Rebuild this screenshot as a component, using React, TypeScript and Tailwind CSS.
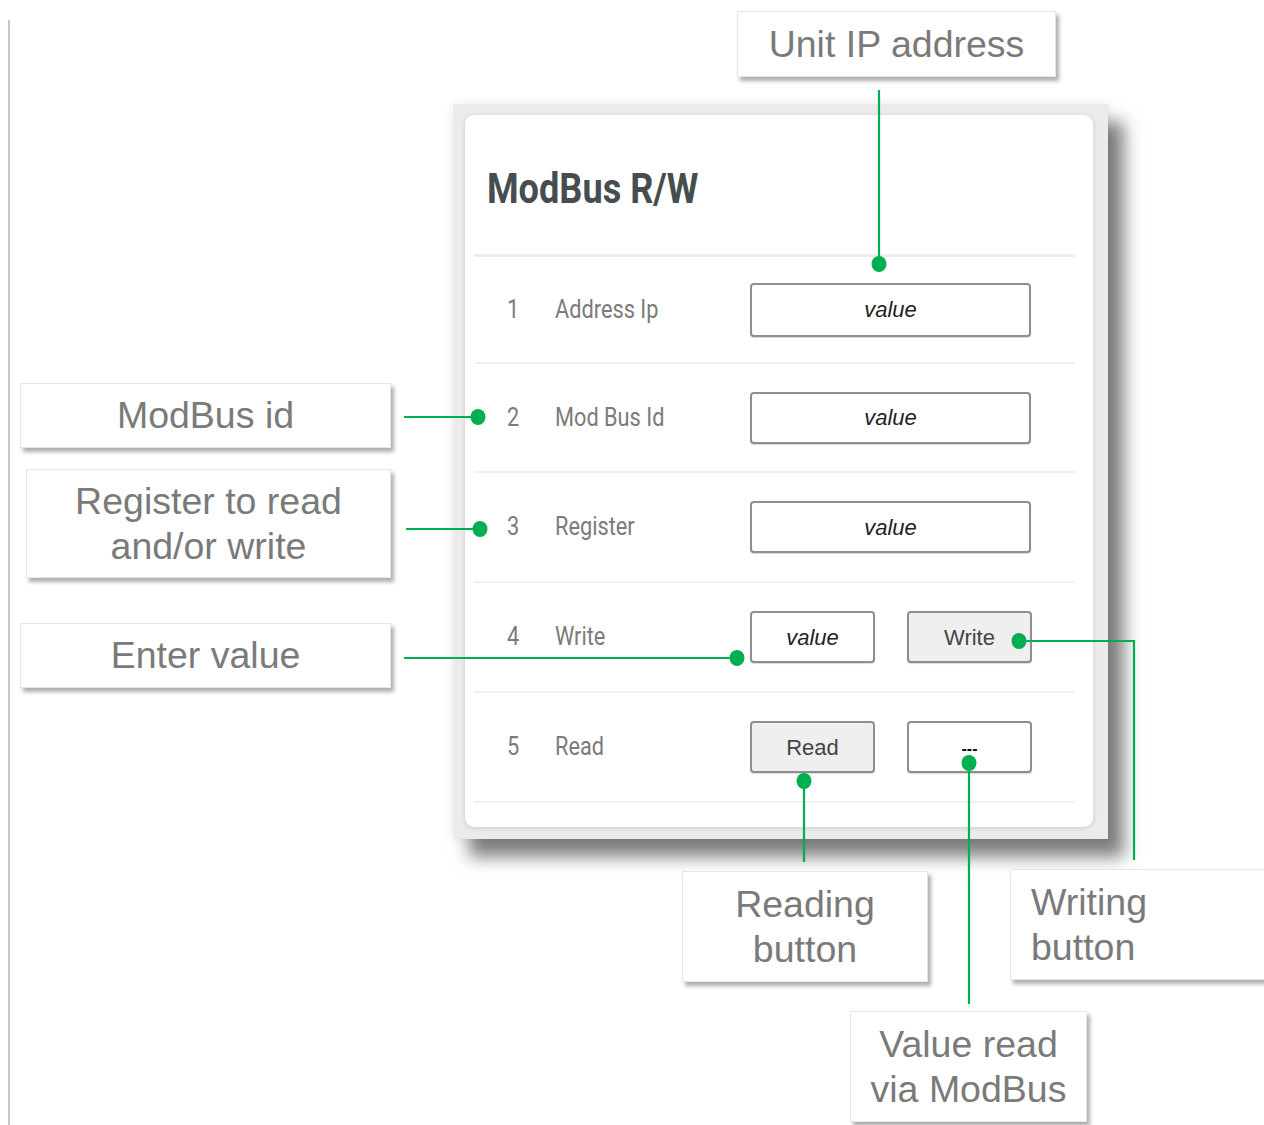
import React from 'react';

const rows = [
  { n: '1', label: 'Address Ip', kind: 'wide', h: 'h-[107px]' },
  { n: '2', label: 'Mod Bus Id', kind: 'wide', h: 'h-[109px]' },
  { n: '3', label: 'Register', kind: 'wide', h: 'h-[110px]' },
  { n: '4', label: 'Write', kind: 'write', h: 'h-[110px]' },
  { n: '5', label: 'Read', kind: 'read', h: 'h-[110px]' },
];

function Field({ children, wide, button, h }: { children: React.ReactNode; wide?: boolean; button?: boolean; h?: string }) {
  return (
    <div
      className={`${wide ? 'w-[281px]' : 'w-[125px]'} ${h ?? 'h-[52px]'} ${button ? 'bg-[#efefef] text-[#444]' : 'bg-white text-[#222]'} flex items-center justify-center rounded-[4px] border-2 border-[#8e8e8e] text-[22px] font-['Liberation_Sans',Arial,sans-serif] shadow-[0_1px_1px_rgba(0,0,0,0.15)]`}
    >
      {children}
    </div>
  );
}

function Callout({ className, children }: { className: string; children: React.ReactNode }) {
  return (
    <div
      className={`absolute bg-white border border-[#e6e6e6] shadow-[3px_4px_4px_rgba(0,0,0,0.32)] text-[37.5px] leading-[45px] text-[#7a7a7a] font-['Liberation_Sans',Arial,sans-serif] ${className}`}
    >
      {children}
    </div>
  );
}

export default function App() {
  return (
    <div className="relative w-[1264px] h-[1125px] bg-white overflow-hidden">
      {/* left rule */}
      <div className="absolute left-[8px] top-[20px] bottom-0 w-[2px] bg-[#c6c6c6]" />

      {/* screenshot of the ModBus panel */}
      <div className="absolute left-[453px] top-[104px] w-[655px] h-[735px] bg-[#ebebeb] pl-[12px] pt-[11px] pr-[15px] pb-[12px] shadow-[16px_18px_16px_rgba(0,0,0,0.5),0_0_12px_rgba(0,0,0,0.08)]">
        <div className="h-full rounded-[9px] bg-white shadow-[0_1px_5px_rgba(0,0,0,0.14)] flex flex-col">
          <div className="h-[139px] pl-[22px] pt-[8px] flex items-center">
            <span className="inline-block origin-left scale-x-[0.86] text-[42px] leading-none font-bold text-[#454d4f] font-['Roboto',sans-serif]">
              ModBus R/W
            </span>
          </div>
          <div className="ml-[9px] mr-[18px] border-t-[3px] border-[#ededed]">
            {rows.map((r) => (
              <div key={r.n} className={`${r.h} border-b-2 border-[#f0f0f0] flex items-center`}>
                <div className="w-[81px] pl-[33px]">
                  <span className="inline-block origin-left scale-x-[0.87] text-[25px] text-[#7b7b7b] font-['Roboto',sans-serif]">{r.n}</span>
                </div>
                <div className="w-[195px]">
                  <span className="inline-block origin-left scale-x-[0.87] text-[25px] whitespace-nowrap text-[#7b7b7b] font-['Roboto',sans-serif]">
                    {r.label}
                  </span>
                </div>
                {r.kind === 'wide' && (
                  <Field wide h={r.n === '1' ? 'h-[54px]' : 'h-[52px]'}>
                    <i>value</i>
                  </Field>
                )}
                {r.kind === 'write' && (
                  <div className="flex gap-[32px]">
                    <Field>
                      <i>value</i>
                    </Field>
                    <Field button>Write</Field>
                  </div>
                )}
                {r.kind === 'read' && (
                  <div className="flex gap-[32px]">
                    <Field button>Read</Field>
                    <Field>
                      <span className="text-[16px] font-bold text-[#111] pt-[4px]">---</span>
                    </Field>
                  </div>
                )}
              </div>
            ))}
          </div>
        </div>
      </div>

      {/* callouts */}
      <Callout className="left-[737px] top-[11px] w-[319px] h-[66px] flex items-center justify-center">Unit IP address</Callout>
      <Callout className="left-[20px] top-[383px] w-[371px] h-[65px] flex items-center justify-center">ModBus id</Callout>
      <Callout className="left-[26px] top-[469px] w-[365px] h-[109px] flex items-center justify-center text-center">
        Register to read
        <br />
        and/or write
      </Callout>
      <Callout className="left-[20px] top-[623px] w-[371px] h-[65px] flex items-center justify-center">Enter value</Callout>
      <Callout className="left-[682px] top-[871px] w-[246px] h-[111px] flex items-center justify-center text-center">
        Reading
        <br />
        button
      </Callout>
      <Callout className="left-[1010px] top-[869px] w-[258px] h-[111px] flex items-center pl-[20px]">
        Writing
        <br />
        button
      </Callout>
      <Callout className="left-[850px] top-[1011px] w-[237px] h-[111px] flex items-center justify-center text-center">
        Value read
        <br />
        via ModBus
      </Callout>

      {/* leader lines */}
      <svg className="absolute inset-0 pointer-events-none" width="1264" height="1125" viewBox="0 0 1264 1125">
        <g stroke="#00b050" strokeWidth="2.2" fill="none">
          <path d="M879 90V264" />
          <path d="M404 417H478" />
          <path d="M406 529H480" />
          <path d="M404 658H737" />
          <path d="M1019 641H1134V860" />
          <path d="M804 781V862" />
          <path d="M969 763V1004" />
        </g>
        <g fill="#00b050">
          <ellipse cx="879" cy="264" rx="7.5" ry="8" />
          <ellipse cx="478" cy="417" rx="7.5" ry="8" />
          <ellipse cx="480" cy="529" rx="7.5" ry="8" />
          <ellipse cx="737" cy="658" rx="7.5" ry="8" />
          <ellipse cx="1019" cy="641" rx="7.5" ry="8" />
          <ellipse cx="804" cy="781" rx="7.5" ry="8" />
          <ellipse cx="969" cy="763" rx="7.5" ry="8" />
        </g>
      </svg>
    </div>
  );
}
